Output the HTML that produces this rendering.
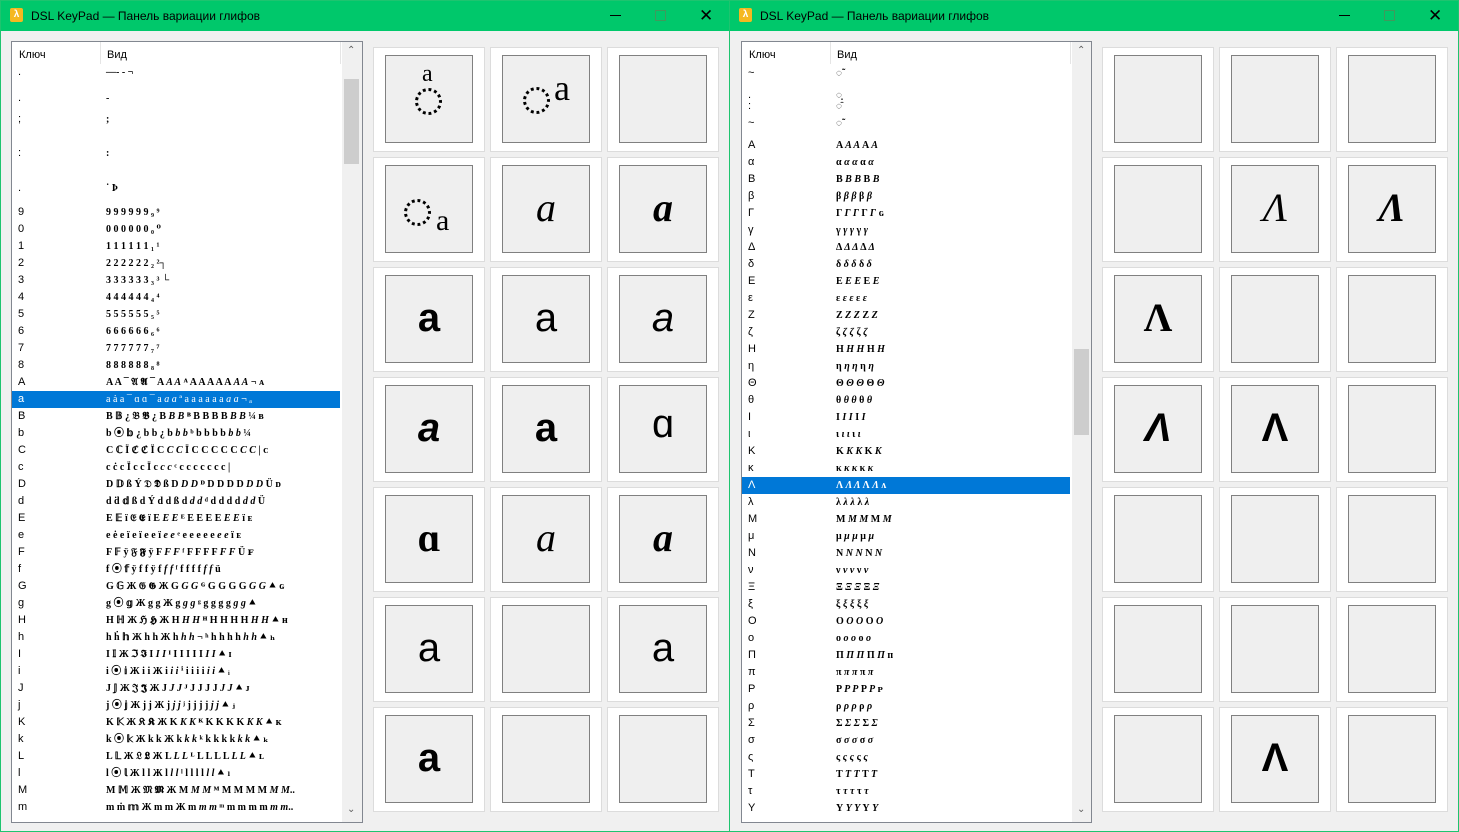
<!DOCTYPE html>
<html><head><meta charset="utf-8"><style>
*{margin:0;padding:0;box-sizing:border-box}
body{width:1459px;height:832px;background:#f0f0f0;position:relative;overflow:hidden;font-family:"Liberation Sans","DejaVu Sans",sans-serif}
.win{position:absolute;top:0;width:730px;height:832px;border:1px solid #1ec46f;background:#f0f0f0}
.tb{position:absolute;left:0;top:0;right:0;height:30px;background:#00c86b}
.tb .ic{position:absolute;left:9px;top:7px;width:13px;height:14px;background:#f5b820;border-radius:2px;color:#fff;font-size:10px;line-height:14px;text-align:center;font-weight:bold}
.tb .t{position:absolute;left:30px;top:8px;font-size:12px;color:#000}
.tb .mn{position:absolute;left:609px;top:14px;width:11px;height:1px;background:#000}
.tb .mx{position:absolute;left:654px;top:9px;width:11px;height:11px;border:1px solid #3f9a5c}
.tb .cl{position:absolute;left:698px;top:5px;font-size:17px;color:#000}
.lb{position:absolute;top:40px;height:782px;background:#fff;border:1px solid #828790;overflow:hidden}
.hd{position:absolute;left:0;top:0;height:24px;font-size:11px;background:#fff}
.hd span{position:absolute;top:7px}
.sep{position:absolute;top:0;width:1px;height:22px;background:#e5e5e5}
.sb{position:absolute;top:0;width:20px;height:780px;background:#f0f0f0}
.th{position:absolute;left:2px;width:15px;background:#cdcdcd}
.ar{position:absolute;left:5px;font-size:10px;color:#606060}
.r{position:absolute;height:17px;font-size:11px;line-height:17px;white-space:nowrap}
.r .k{position:absolute;left:6px}
.r .v{position:absolute;left:94px;font-family:"Liberation Serif","DejaVu Serif",serif;font-weight:bold;font-size:10px}
.sel{background:#0078d7;color:#fff}
.c{position:absolute;width:112px;height:105px;background:#fff;border:1px solid #dcdcdc}
.c i{position:absolute;left:11px;top:7px;width:88px;height:88px;background:#efefef;border:1px solid #808080;font-style:normal;font-family:"Liberation Serif","DejaVu Serif",serif;font-size:40px;text-align:center;line-height:84px;color:#000}
.dc{position:absolute;width:27px;height:27px;border:3px dotted #000;border-radius:50%}
.la{position:absolute;font-family:"Liberation Serif",serif;color:#000}
</style></head><body>

<div class="win" style="left:0">
 <div class="tb"><div class="ic">λ</div><div class="t">DSL KeyPad — Панель вариации глифов</div><div class="mn"></div><div class="mx"></div><div class="cl">✕</div></div>
 <div class="lb" style="left:10px;width:352px">
  <div class="hd" style="width:330px"><span style="left:7px">Ключ</span><span style="left:95px">Вид</span></div>
  <div class="sep" style="left:88px"></div><div class="sep" style="left:328px"></div>
  <div class="sb" style="left:330px"><div class="ar" style="top:3px">⌃</div><div class="th" style="top:37px;height:85px"></div><div class="ar" style="top:762px">⌄</div></div>
  <div class="r" style="top:22px;width:328px"><span class="k">.</span><span class="v">—‐ ‑ ¬</span></div>
  <div class="r" style="top:48px;width:328px"><span class="k">.</span><span class="v">-</span></div>
  <div class="r" style="top:69px;width:328px"><span class="k">;</span><span class="v">;</span></div>
  <div class="r" style="top:103px;width:328px"><span class="k">:</span><span class="v">:</span></div>
  <div class="r" style="top:138px;width:328px"><span class="k">.</span><span class="v">˙ Þ</span></div>
  <div class="r" style="top:162px;width:328px"><span class="k">9</span><span class="v">9 9 9 9 9 9 ₉ ⁹</span></div>
  <div class="r" style="top:179px;width:328px"><span class="k">0</span><span class="v">0 0 0 0 0 0 ₀ ⁰</span></div>
  <div class="r" style="top:196px;width:328px"><span class="k">1</span><span class="v">1 1 1 1 1 1 ₁ ¹</span></div>
  <div class="r" style="top:213px;width:328px"><span class="k">2</span><span class="v">2 2 2 2 2 2 ₂ ²┐</span></div>
  <div class="r" style="top:230px;width:328px"><span class="k">3</span><span class="v">3 3 3 3 3 3 ₃ ³ └</span></div>
  <div class="r" style="top:247px;width:328px"><span class="k">4</span><span class="v">4 4 4 4 4 4 ₄ ⁴</span></div>
  <div class="r" style="top:264px;width:328px"><span class="k">5</span><span class="v">5 5 5 5 5 5 ₅ ⁵</span></div>
  <div class="r" style="top:281px;width:328px"><span class="k">6</span><span class="v">6 6 6 6 6 6 ₆ ⁶</span></div>
  <div class="r" style="top:298px;width:328px"><span class="k">7</span><span class="v">7 7 7 7 7 7 ₇ ⁷</span></div>
  <div class="r" style="top:315px;width:328px"><span class="k">8</span><span class="v">8 8 8 8 8 8 ₈ ⁸</span></div>
  <div class="r" style="top:332px;width:328px"><span class="k">A</span><span class="v">A A ¯ 𝔄 𝕬 ¯ A <i>A A</i> ᴬ A A A A A <i>A A</i> ¬ ᴀ</span></div>
  <div class="r sel" style="top:349px;width:328px"><span class="k">a</span><span class="v" style="font-weight:normal">a ȧ a ¯ ɑ ɑ ¯ a <i>a a</i> ª a a a a a a <i>a a</i> ¬ ₐ</span></div>
  <div class="r" style="top:366px;width:328px"><span class="k">B</span><span class="v">B 𝔹 ¿ 𝔅 𝕭 ¿ B <i>B B</i> ᴮ B B B B <i>B B</i> ¼ ʙ</span></div>
  <div class="r" style="top:383px;width:328px"><span class="k">b</span><span class="v">b ⦿ 𝕓 ¿ b b ¿ b <i>b b</i> ᵇ b b b b <i>b b</i> ¼</span></div>
  <div class="r" style="top:400px;width:328px"><span class="k">C</span><span class="v">C ℂ Ï ℭ ℭ Ï C <i>C C</i> Ï C C C C C <i>C C</i> | ᴄ</span></div>
  <div class="r" style="top:417px;width:328px"><span class="k">c</span><span class="v">c ċ c Ï c c Ï c <i>c c</i> ᶜ c c c c c c c |</span></div>
  <div class="r" style="top:434px;width:328px"><span class="k">D</span><span class="v">D 𝔻 ß Ý 𝔇 𝕯 ß D <i>D D</i> ᴰ D D D D <i>D D</i> Ü ᴅ</span></div>
  <div class="r" style="top:451px;width:328px"><span class="k">d</span><span class="v">d ḋ 𝕕 ß d Ý d d ß d <i>d d</i> ᵈ d d d d <i>d d</i> Ü</span></div>
  <div class="r" style="top:468px;width:328px"><span class="k">E</span><span class="v">E 𝔼 ï 𝔈 𝕰 ï E <i>E E</i> ᴱ E E E E <i>E E</i> ï ᴇ</span></div>
  <div class="r" style="top:485px;width:328px"><span class="k">e</span><span class="v">e ė e ï e ï e e ï <i>e e</i> ᵉ e e e e e <i>e e</i> ï ᴇ</span></div>
  <div class="r" style="top:502px;width:328px"><span class="k">F</span><span class="v">F 𝔽 ÿ 𝔉 𝕱 ÿ F <i>F F</i> ᶠ F F F F <i>F F</i> Ü ꜰ</span></div>
  <div class="r" style="top:519px;width:328px"><span class="k">f</span><span class="v">f ⦿ 𝕗 ÿ f f ÿ f <i>f f</i> ᶠ f f f f <i>f f</i> ü</span></div>
  <div class="r" style="top:536px;width:328px"><span class="k">G</span><span class="v">G 𝔾 Ж 𝔊 𝕲 Ж G <i>G G</i> ᴳ G G G G <i>G G</i> ⯅ ɢ</span></div>
  <div class="r" style="top:553px;width:328px"><span class="k">g</span><span class="v">g ⦿ 𝕘 Ж g g Ж g <i>g g</i> ᵍ g g g g <i>g g</i> ⯅</span></div>
  <div class="r" style="top:570px;width:328px"><span class="k">H</span><span class="v">H ℍ Ж ℌ 𝕳 Ж H <i>H H</i> ᴴ H H H H <i>H H</i> ⯅ ʜ</span></div>
  <div class="r" style="top:587px;width:328px"><span class="k">h</span><span class="v">h ḣ 𝕙 Ж h h Ж h <i>h h</i> ¬ ʰ h h h h <i>h h</i> ⯅ ₕ</span></div>
  <div class="r" style="top:604px;width:328px"><span class="k">I</span><span class="v">I 𝕀 Ж ℑ 𝕴 I <i>I I</i> ᴵ I I I I I <i>I I</i> ⯅ ɪ</span></div>
  <div class="r" style="top:621px;width:328px"><span class="k">i</span><span class="v">i ⦿ 𝕚 Ж i i Ж i <i>i i</i> ⁱ i i i i <i>i i</i> ⯅ ᵢ</span></div>
  <div class="r" style="top:638px;width:328px"><span class="k">J</span><span class="v">J 𝕁 Ж 𝔍 𝕵 Ж J <i>J J</i> ᴶ J J J J <i>J J</i> ⯅ ᴊ</span></div>
  <div class="r" style="top:655px;width:328px"><span class="k">j</span><span class="v">j ⦿ 𝕛 Ж j j Ж j <i>j j</i> ʲ j j j j <i>j j</i> ⯅ ⱼ</span></div>
  <div class="r" style="top:672px;width:328px"><span class="k">K</span><span class="v">K 𝕂 Ж 𝔎 𝕶 Ж K <i>K K</i> ᴷ K K K K <i>K K</i> ⯅ ᴋ</span></div>
  <div class="r" style="top:689px;width:328px"><span class="k">k</span><span class="v">k ⦿ 𝕜 Ж k k Ж k <i>k k</i> ᵏ k k k k <i>k k</i> ⯅ ₖ</span></div>
  <div class="r" style="top:706px;width:328px"><span class="k">L</span><span class="v">L 𝕃 Ж 𝔏 𝕷 Ж L <i>L L</i> ᴸ L L L L <i>L L</i> ⯅ ʟ</span></div>
  <div class="r" style="top:723px;width:328px"><span class="k">l</span><span class="v">l ⦿ 𝕝 Ж l l Ж l <i>l l</i> ˡ l l l l <i>l l</i> ⯅ ₗ</span></div>
  <div class="r" style="top:740px;width:328px"><span class="k">M</span><span class="v">M 𝕄 Ж 𝔐 𝕸 Ж M <i>M M</i> ᴹ M M M M <i>M M</i>..</span></div>
  <div class="r" style="top:757px;width:328px"><span class="k">m</span><span class="v">m ṁ 𝕞 Ж m m Ж m <i>m m</i> ᵐ m m m m <i>m m</i>..</span></div>
 </div>
 <div class="c" style="left:372px;top:46px"><i><span class="la" style="left:36px;top:6px;font-size:24px;line-height:24px">a</span><span class="dc" style="left:29px;top:32px"></span></i></div>
 <div class="c" style="left:489px;top:46px"><i><span class="dc" style="left:20px;top:31px"></span><span class="la" style="left:51px;top:14px;font-size:36px;line-height:36px">a</span></i></div>
 <div class="c" style="left:606px;top:46px"><i></i></div>
 <div class="c" style="left:372px;top:156px"><i><span class="dc" style="left:18px;top:33px"></span><span class="la" style="left:50px;top:40px;font-size:30px;line-height:30px">a</span></i></div>
 <div class="c" style="left:489px;top:156px"><i style="font-style:italic">a</i></div>
 <div class="c" style="left:606px;top:156px"><i style="font-style:italic;font-weight:bold">a</i></div>
 <div class="c" style="left:372px;top:266px"><i style="font-family:'Liberation Sans',sans-serif;font-weight:bold">a</i></div>
 <div class="c" style="left:489px;top:266px"><i style="font-family:'Liberation Sans',sans-serif">a</i></div>
 <div class="c" style="left:606px;top:266px"><i style="font-family:'Liberation Sans',sans-serif;font-style:italic">a</i></div>
 <div class="c" style="left:372px;top:376px"><i style="font-family:'Liberation Sans',sans-serif;font-weight:bold;font-style:italic">a</i></div>
 <div class="c" style="left:489px;top:376px"><i style="font-family:'Liberation Sans',sans-serif;font-weight:bold">a</i></div>
 <div class="c" style="left:606px;top:376px"><i style="font-family:'Liberation Mono',monospace">ɑ</i></div>
 <div class="c" style="left:372px;top:486px"><i style="font-weight:bold">ɑ</i></div>
 <div class="c" style="left:489px;top:486px"><i style="font-style:italic">a</i></div>
 <div class="c" style="left:606px;top:486px"><i style="font-style:italic;font-weight:bold">a</i></div>
 <div class="c" style="left:372px;top:596px"><i style="font-family:'Liberation Sans',sans-serif">a</i></div>
 <div class="c" style="left:489px;top:596px"><i></i></div>
 <div class="c" style="left:606px;top:596px"><i style="font-family:'Liberation Sans',sans-serif">a</i></div>
 <div class="c" style="left:372px;top:706px"><i style="font-family:'Liberation Sans',sans-serif;font-weight:bold">a</i></div>
 <div class="c" style="left:489px;top:706px"><i></i></div>
 <div class="c" style="left:606px;top:706px"><i></i></div>
</div>

<div class="win" style="left:729px">
 <div class="tb"><div class="ic">λ</div><div class="t">DSL KeyPad — Панель вариации глифов</div><div class="mn"></div><div class="mx"></div><div class="cl">✕</div></div>
 <div class="lb" style="left:11px;width:351px">
  <div class="hd" style="width:330px"><span style="left:7px">Ключ</span><span style="left:95px">Вид</span></div>
  <div class="sep" style="left:88px"></div><div class="sep" style="left:328px"></div>
  <div class="sb" style="left:330px"><div class="ar" style="top:3px">⌃</div><div class="th" style="top:307px;height:86px"></div><div class="ar" style="top:762px">⌄</div></div>
  <div class="r" style="top:23px;width:328px"><span class="k">~</span><span class="v">◌̃</span></div>
  <div class="r" style="top:45px;width:328px"><span class="k">.</span><span class="v">◌̣</span></div>
  <div class="r" style="top:56px;width:328px"><span class="k">:</span><span class="v">◌̈</span></div>
  <div class="r" style="top:73px;width:328px"><span class="k">~</span><span class="v">◌̃</span></div>
  <div class="r" style="top:95px;width:328px"><span class="k">Α</span><span class="v">Α <i>Α Α</i> Α <i>Α</i></span></div>
  <div class="r" style="top:112px;width:328px"><span class="k">α</span><span class="v">α <i>α α</i> α <i>α</i></span></div>
  <div class="r" style="top:129px;width:328px"><span class="k">Β</span><span class="v">Β <i>Β Β</i> Β <i>Β</i></span></div>
  <div class="r" style="top:146px;width:328px"><span class="k">β</span><span class="v">β <i>β β</i> β <i>β</i></span></div>
  <div class="r" style="top:163px;width:328px"><span class="k">Γ</span><span class="v">Γ <i>Γ Γ</i> Γ <i>Γ</i> ɢ</span></div>
  <div class="r" style="top:180px;width:328px"><span class="k">γ</span><span class="v">γ <i>γ γ</i> γ <i>γ</i></span></div>
  <div class="r" style="top:197px;width:328px"><span class="k">Δ</span><span class="v">Δ <i>Δ Δ</i> Δ <i>Δ</i></span></div>
  <div class="r" style="top:214px;width:328px"><span class="k">δ</span><span class="v">δ <i>δ δ</i> δ <i>δ</i></span></div>
  <div class="r" style="top:231px;width:328px"><span class="k">Ε</span><span class="v">Ε <i>Ε Ε</i> Ε <i>Ε</i></span></div>
  <div class="r" style="top:248px;width:328px"><span class="k">ε</span><span class="v">ε <i>ε ε</i> ε <i>ε</i></span></div>
  <div class="r" style="top:265px;width:328px"><span class="k">Ζ</span><span class="v">Ζ <i>Ζ Ζ</i> Ζ <i>Ζ</i></span></div>
  <div class="r" style="top:282px;width:328px"><span class="k">ζ</span><span class="v">ζ <i>ζ ζ</i> ζ <i>ζ</i></span></div>
  <div class="r" style="top:299px;width:328px"><span class="k">Η</span><span class="v">Η <i>Η Η</i> Η <i>Η</i></span></div>
  <div class="r" style="top:316px;width:328px"><span class="k">η</span><span class="v">η <i>η η</i> η <i>η</i></span></div>
  <div class="r" style="top:333px;width:328px"><span class="k">Θ</span><span class="v">Θ <i>Θ Θ</i> Θ <i>Θ</i></span></div>
  <div class="r" style="top:350px;width:328px"><span class="k">θ</span><span class="v">θ <i>θ θ</i> θ <i>θ</i></span></div>
  <div class="r" style="top:367px;width:328px"><span class="k">Ι</span><span class="v">Ι <i>Ι Ι</i> Ι <i>Ι</i></span></div>
  <div class="r" style="top:384px;width:328px"><span class="k">ι</span><span class="v">ι <i>ι ι</i> ι <i>ι</i></span></div>
  <div class="r" style="top:401px;width:328px"><span class="k">Κ</span><span class="v">Κ <i>Κ Κ</i> Κ <i>Κ</i></span></div>
  <div class="r" style="top:418px;width:328px"><span class="k">κ</span><span class="v">κ <i>κ κ</i> κ <i>κ</i></span></div>
  <div class="r sel" style="top:435px;width:328px"><span class="k">Λ</span><span class="v">Λ <i>Λ Λ</i> Λ <i>Λ</i> ᴧ</span></div>
  <div class="r" style="top:452px;width:328px"><span class="k">λ</span><span class="v">λ <i>λ λ</i> λ <i>λ</i></span></div>
  <div class="r" style="top:469px;width:328px"><span class="k">Μ</span><span class="v">Μ <i>Μ Μ</i> Μ <i>Μ</i></span></div>
  <div class="r" style="top:486px;width:328px"><span class="k">μ</span><span class="v">μ <i>μ μ</i> μ <i>μ</i></span></div>
  <div class="r" style="top:503px;width:328px"><span class="k">Ν</span><span class="v">Ν <i>Ν Ν</i> Ν <i>Ν</i></span></div>
  <div class="r" style="top:520px;width:328px"><span class="k">ν</span><span class="v">ν <i>ν ν</i> ν <i>ν</i></span></div>
  <div class="r" style="top:537px;width:328px"><span class="k">Ξ</span><span class="v">Ξ <i>Ξ Ξ</i> Ξ <i>Ξ</i></span></div>
  <div class="r" style="top:554px;width:328px"><span class="k">ξ</span><span class="v">ξ <i>ξ ξ</i> ξ <i>ξ</i></span></div>
  <div class="r" style="top:571px;width:328px"><span class="k">Ο</span><span class="v">Ο <i>Ο Ο</i> Ο <i>Ο</i></span></div>
  <div class="r" style="top:588px;width:328px"><span class="k">ο</span><span class="v">ο <i>ο ο</i> ο <i>ο</i></span></div>
  <div class="r" style="top:605px;width:328px"><span class="k">Π</span><span class="v">Π <i>Π Π</i> Π <i>Π</i> ᴨ</span></div>
  <div class="r" style="top:622px;width:328px"><span class="k">π</span><span class="v">π <i>π π</i> π <i>π</i></span></div>
  <div class="r" style="top:639px;width:328px"><span class="k">Ρ</span><span class="v">Ρ <i>Ρ Ρ</i> Ρ <i>Ρ</i> ᴘ</span></div>
  <div class="r" style="top:656px;width:328px"><span class="k">ρ</span><span class="v">ρ <i>ρ ρ</i> ρ <i>ρ</i></span></div>
  <div class="r" style="top:673px;width:328px"><span class="k">Σ</span><span class="v">Σ <i>Σ Σ</i> Σ <i>Σ</i></span></div>
  <div class="r" style="top:690px;width:328px"><span class="k">σ</span><span class="v">σ <i>σ σ</i> σ <i>σ</i></span></div>
  <div class="r" style="top:707px;width:328px"><span class="k">ς</span><span class="v">ς <i>ς ς</i> ς <i>ς</i></span></div>
  <div class="r" style="top:724px;width:328px"><span class="k">Τ</span><span class="v">Τ <i>Τ Τ</i> Τ <i>Τ</i></span></div>
  <div class="r" style="top:741px;width:328px"><span class="k">τ</span><span class="v">τ <i>τ τ</i> τ <i>τ</i></span></div>
  <div class="r" style="top:758px;width:328px"><span class="k">Υ</span><span class="v">Υ <i>Υ Υ</i> Υ <i>Υ</i></span></div>
 </div>
 <div class="c" style="left:372px;top:46px"><i></i></div>
 <div class="c" style="left:489px;top:46px"><i></i></div>
 <div class="c" style="left:606px;top:46px"><i></i></div>
 <div class="c" style="left:372px;top:156px"><i></i></div>
 <div class="c" style="left:489px;top:156px"><i style="font-style:italic">Λ</i></div>
 <div class="c" style="left:606px;top:156px"><i style="font-style:italic;font-weight:bold">Λ</i></div>
 <div class="c" style="left:372px;top:266px"><i style="font-weight:bold">Λ</i></div>
 <div class="c" style="left:489px;top:266px"><i></i></div>
 <div class="c" style="left:606px;top:266px"><i></i></div>
 <div class="c" style="left:372px;top:376px"><i style="font-family:'Liberation Sans',sans-serif;font-weight:bold;font-style:italic">Λ</i></div>
 <div class="c" style="left:489px;top:376px"><i style="font-family:'Liberation Sans',sans-serif;font-weight:bold">Λ</i></div>
 <div class="c" style="left:606px;top:376px"><i></i></div>
 <div class="c" style="left:372px;top:486px"><i></i></div>
 <div class="c" style="left:489px;top:486px"><i></i></div>
 <div class="c" style="left:606px;top:486px"><i></i></div>
 <div class="c" style="left:372px;top:596px"><i></i></div>
 <div class="c" style="left:489px;top:596px"><i></i></div>
 <div class="c" style="left:606px;top:596px"><i></i></div>
 <div class="c" style="left:372px;top:706px"><i></i></div>
 <div class="c" style="left:489px;top:706px"><i style="font-family:'Liberation Sans',sans-serif;font-weight:bold">Λ</i></div>
 <div class="c" style="left:606px;top:706px"><i></i></div>
</div>
</body></html>
